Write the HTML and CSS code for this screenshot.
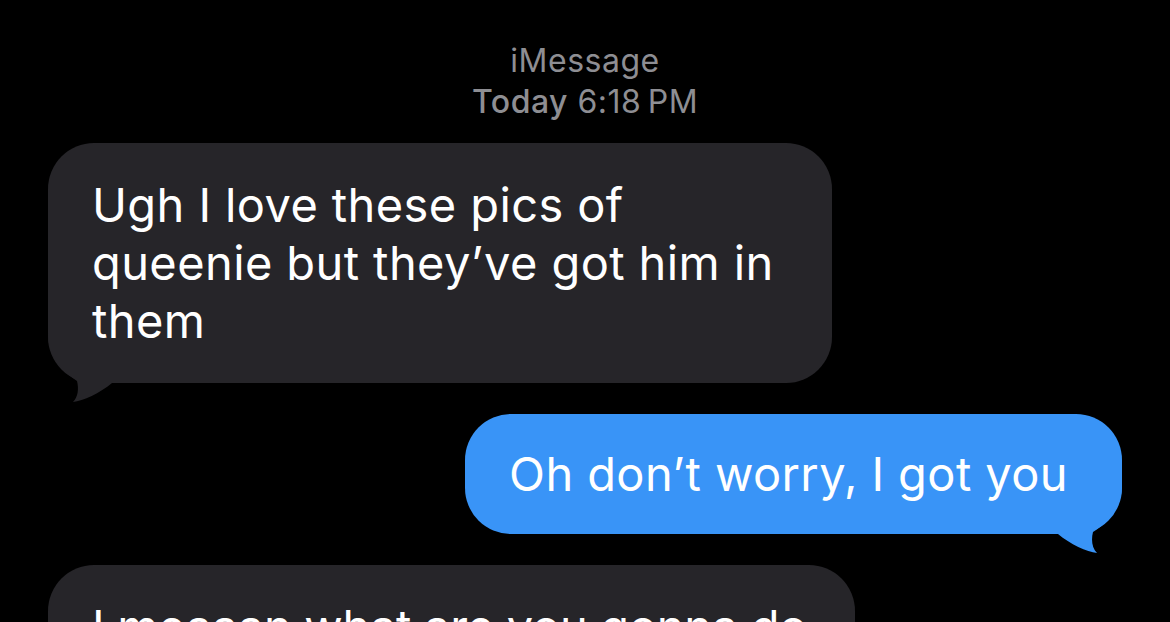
FILE: index.html
```html
<!DOCTYPE html>
<html lang="en">
<head>
<meta charset="utf-8">
<title>iMessage</title>
<link rel="stylesheet" href="styles.css">
</head>
<body>
<div class="screen">
  <header class="meta">
    <div class="service">iMessage</div>
    <div class="time"><span class="day">Today</span> 6:18&#8201;PM</div>
  </header>
  <div class="thread">
    <div class="row in">
      <div class="bubble gray">
        <p>Ugh I love these pics of queenie but they’ve got him in them</p>
        <svg class="tail tail-left" width="70" height="80" viewBox="0 0 70 80"><path d="M0,0 L0,10 C0,35 14,48 29,58 C31,66 30,74 25,79 C35,78 52,70 64,60 L70,60 L70,0 Z"/></svg>
      </div>
    </div>
    <div class="row out">
      <div class="bubble blue">
        <p>Oh don’t worry, I got you</p>
        <svg class="tail tail-right" width="70" height="80" viewBox="0 0 70 80"><path d="M0,0 L0,10 C0,35 14,48 29,58 C31,66 30,74 25,79 C35,78 52,70 64,60 L70,60 L70,0 Z"/></svg>
      </div>
    </div>
    <div class="row in">
      <div class="bubble gray wide">
        <p>I meaaan what are you gonna do</p>
      </div>
    </div>
  </div>
</div>
</body>
</html>
```
FILE: styles.css
```css
* { box-sizing: border-box; }
html, body {
  margin: 0;
  padding: 0;
  background: #000;
}
body {
  font-family: Inter, "Noto Sans", "Liberation Sans", sans-serif;
  -webkit-font-smoothing: antialiased;
}
.screen {
  width: 1170px;
  height: 622px;
  overflow: hidden;
}
.meta {
  padding-top: 40px;
  text-align: center;
  color: #8e8e93;
  font-size: 32px;
  line-height: 41px;
  letter-spacing: 0.5px;
}
.meta .day { font-weight: 500; }
.thread {
  display: flex;
  flex-direction: column;
  gap: 31px;
  padding: 21px 48px 0;
}
.row { display: flex; }
.row.in { justify-content: flex-start; }
.row.out { justify-content: flex-end; }
.bubble {
  position: relative;
  max-width: 784px;
  border-radius: 46px;
  padding: 33px 44px;
  color: #fff;
  font-size: 47px;
  line-height: 58px;
  letter-spacing: 0.4px;
}
.bubble p { margin: 0; position: relative; z-index: 1; }
.bubble.gray { background: #262529; }
.bubble.blue { background: #3994f7; padding: 31px 54px 31px 44px; }
.bubble.wide { width: 807px; max-width: 807px; letter-spacing: -0.3px; }
.bubble.wide p { white-space: nowrap; }
.tail {
  position: absolute;
  bottom: -20px;
}
.gray .tail { fill: #262529; }
.blue .tail { fill: #3994f7; }
.tail-left { left: 0; }
.tail-right { right: 0; transform: scaleX(-1); }
```
